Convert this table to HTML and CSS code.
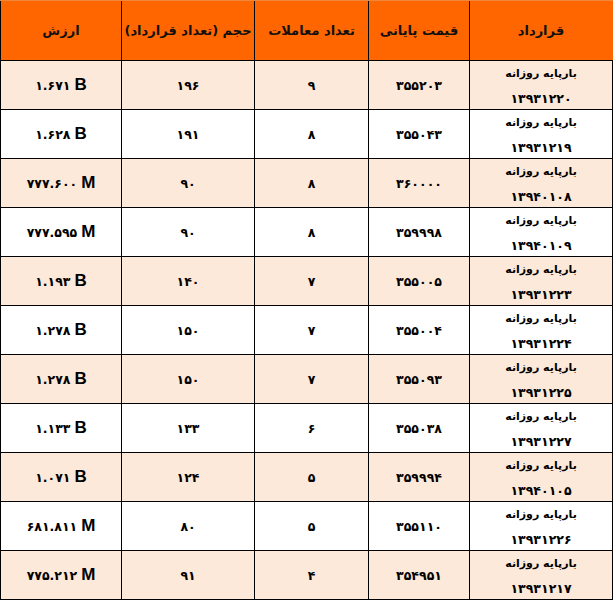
FILE: index.html
```html
<!DOCTYPE html>
<html lang="fa" dir="rtl">
<head>
<meta charset="utf-8">
<title>معاملات بارپایه روزانه</title>
<link rel="stylesheet" href="styles.css">
</head>
<body>
<div class="sheet">
  <div class="row head">
    <div class="cell">قرارداد</div>
    <div class="cell">قیمت پایانی</div>
    <div class="cell">تعداد معاملات</div>
    <div class="cell">حجم (تعداد قرارداد)</div>
    <div class="cell">ارزش</div>
  </div>

  <div class="row odd">
    <div class="cell name"><span>بارپایه روزانه</span><span class="num">۱۳۹۳۱۲۲۰</span></div>
    <div class="cell num">۳۵۵۲۰۳</div>
    <div class="cell num">۹</div>
    <div class="cell num">۱۹۶</div>
    <div class="cell val"><span class="num">۱.۶۷۱</span> <b>B</b></div>
  </div>
  <div class="row">
    <div class="cell name"><span>بارپایه روزانه</span><span class="num">۱۳۹۳۱۲۱۹</span></div>
    <div class="cell num">۳۵۵۰۴۳</div>
    <div class="cell num">۸</div>
    <div class="cell num">۱۹۱</div>
    <div class="cell val"><span class="num">۱.۶۲۸</span> <b>B</b></div>
  </div>
  <div class="row odd">
    <div class="cell name"><span>بارپایه روزانه</span><span class="num">۱۳۹۴۰۱۰۸</span></div>
    <div class="cell num">۳۶۰۰۰۰</div>
    <div class="cell num">۸</div>
    <div class="cell num">۹۰</div>
    <div class="cell val"><span class="num">۷۷۷.۶۰۰</span> <b>M</b></div>
  </div>
  <div class="row">
    <div class="cell name"><span>بارپایه روزانه</span><span class="num">۱۳۹۴۰۱۰۹</span></div>
    <div class="cell num">۳۵۹۹۹۸</div>
    <div class="cell num">۸</div>
    <div class="cell num">۹۰</div>
    <div class="cell val"><span class="num">۷۷۷.۵۹۵</span> <b>M</b></div>
  </div>
  <div class="row odd">
    <div class="cell name"><span>بارپایه روزانه</span><span class="num">۱۳۹۳۱۲۲۳</span></div>
    <div class="cell num">۳۵۵۰۰۵</div>
    <div class="cell num">۷</div>
    <div class="cell num">۱۴۰</div>
    <div class="cell val"><span class="num">۱.۱۹۳</span> <b>B</b></div>
  </div>
  <div class="row">
    <div class="cell name"><span>بارپایه روزانه</span><span class="num">۱۳۹۳۱۲۲۴</span></div>
    <div class="cell num">۳۵۵۰۰۴</div>
    <div class="cell num">۷</div>
    <div class="cell num">۱۵۰</div>
    <div class="cell val"><span class="num">۱.۲۷۸</span> <b>B</b></div>
  </div>
  <div class="row odd">
    <div class="cell name"><span>بارپایه روزانه</span><span class="num">۱۳۹۳۱۲۲۵</span></div>
    <div class="cell num">۳۵۵۰۹۳</div>
    <div class="cell num">۷</div>
    <div class="cell num">۱۵۰</div>
    <div class="cell val"><span class="num">۱.۲۷۸</span> <b>B</b></div>
  </div>
  <div class="row">
    <div class="cell name"><span>بارپایه روزانه</span><span class="num">۱۳۹۳۱۲۲۷</span></div>
    <div class="cell num">۳۵۵۰۳۸</div>
    <div class="cell num">۶</div>
    <div class="cell num">۱۳۳</div>
    <div class="cell val"><span class="num">۱.۱۳۳</span> <b>B</b></div>
  </div>
  <div class="row odd">
    <div class="cell name"><span>بارپایه روزانه</span><span class="num">۱۳۹۴۰۱۰۵</span></div>
    <div class="cell num">۳۵۹۹۹۴</div>
    <div class="cell num">۵</div>
    <div class="cell num">۱۲۴</div>
    <div class="cell val"><span class="num">۱.۰۷۱</span> <b>B</b></div>
  </div>
  <div class="row">
    <div class="cell name"><span>بارپایه روزانه</span><span class="num">۱۳۹۳۱۲۲۶</span></div>
    <div class="cell num">۳۵۵۱۱۰</div>
    <div class="cell num">۵</div>
    <div class="cell num">۸۰</div>
    <div class="cell val"><span class="num">۶۸۱.۸۱۱</span> <b>M</b></div>
  </div>
  <div class="row odd">
    <div class="cell name"><span>بارپایه روزانه</span><span class="num">۱۳۹۳۱۲۱۷</span></div>
    <div class="cell num">۳۵۴۹۵۱</div>
    <div class="cell num">۴</div>
    <div class="cell num">۹۱</div>
    <div class="cell val"><span class="num">۷۷۵.۲۱۲</span> <b>M</b></div>
  </div>
</div>
</body>
</html>
```

FILE: styles.css
```css
html, body {
  margin: 0;
  padding: 0;
  background: #ffffff;
}

.sheet {
  width: 613px;
  direction: rtl;
  font-family: "DejaVu Sans", sans-serif;
  color: #000000;
}

.row {
  display: grid;
  grid-template-columns: 144px 101px 114px 133px 121px;
  height: 49px;
  box-sizing: border-box;
  border-bottom: 1px solid #000000;
  background: #ffffff;
}

.row.odd {
  background: #fde9d9;
}

.row.head {
  height: 61px;
  background: #ff6600;
  border-top: 1px solid #f0883c;
  font-weight: bold;
  font-size: 13px;
  color: #111111;
}

.cell {
  box-sizing: border-box;
  border-left: 1px solid #000000;
  display: flex;
  align-items: center;
  justify-content: center;
  overflow: hidden;
  white-space: nowrap;
}

.row .cell:first-child {
  border-right: 1px solid #000000;
}

.row.head .cell:first-child {
  border-right: 1px solid #ff6600;
}

.num {
  font-weight: bold;
  font-size: 12.5px;
}

.cell.name {
  flex-direction: column;
  justify-content: flex-start;
  font-size: 11px;
  font-weight: bold;
  line-height: 25px;
}

.cell.val {
  direction: ltr;
  gap: 4px;
}

.cell.val b {
  font-family: "Liberation Sans", Arial, sans-serif;
  font-size: 17px;
  font-weight: bold;
}
```
